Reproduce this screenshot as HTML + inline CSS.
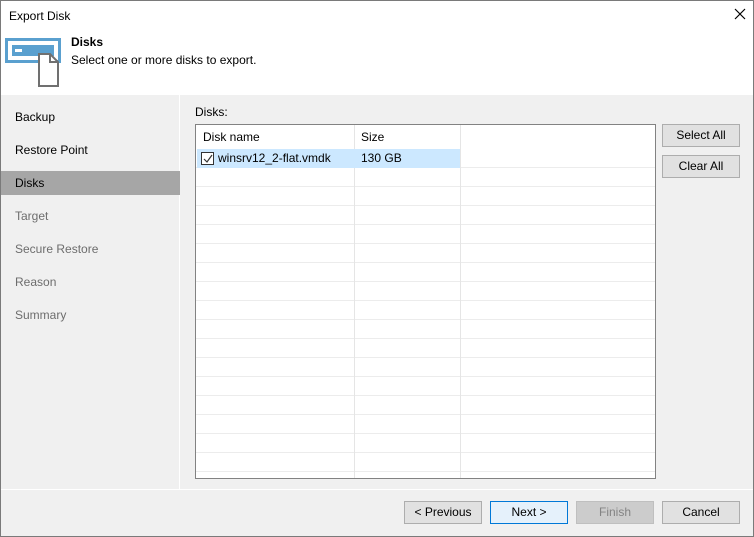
<!DOCTYPE html><html><head><style>
*{box-sizing:border-box;margin:0;padding:0}
body{width:754px;height:537px;position:relative;font-family:"Segoe UI","Liberation Sans",sans-serif;font-size:12px;color:#000;background:#f0f0f0;overflow:hidden}
.win{position:absolute;left:0;top:0;width:754px;height:537px;border:1px solid #7a7a7a}
.abs{position:absolute}
.btn{position:absolute;height:23px;width:78px;border:1px solid #adadad;background:#e1e1e1;text-align:center;line-height:21px;font-size:12px}
.nav{position:absolute;left:14px;font-size:12px;color:#000}
.dim{color:#6d6d6d}
</style></head><body><div class="win">
<div class="abs" style="left:0;top:0;width:752px;height:94px;background:#fff"></div>
<div class="abs" style="left:8px;top:8px;font-size:12px">Export Disk</div>
<svg class="abs" style="left:733px;top:7px" width="12" height="12"><path d="M1 1L11 11M11 1L1 11" stroke="#000" stroke-width="1.2"/></svg>
<svg class="abs" style="left:-1px;top:29px" width="70" height="62"><rect x="6.5" y="9.5" width="53" height="22" fill="none" stroke="#5aa0cf" stroke-width="3"/><rect x="12" y="15" width="42" height="11" fill="#5aa0cf"/><rect x="15" y="19" width="7" height="3" fill="#fff"/><path d="M39 24h11l8 8v24h-19z" fill="#fff" stroke="#707070" stroke-width="2"/><path d="M50 24v8h8" fill="none" stroke="#707070" stroke-width="2"/></svg>
<div class="abs" style="left:70px;top:34px;font-weight:bold">Disks</div>
<div class="abs" style="left:70px;top:52px">Select one or more disks to export.</div>
<div class="abs" style="left:0;top:94px;width:179px;height:394px;background:#f0f0f0;border-right:1px solid #fff"></div>
<div class="abs" style="left:0;top:170px;width:179px;height:24px;background:#a6a6a6"></div>
<div class="nav" style="top:109px">Backup</div>
<div class="nav" style="top:142px">Restore Point</div>
<div class="nav" style="top:175px">Disks</div>
<div class="nav dim" style="top:208px">Target</div>
<div class="nav dim" style="top:241px">Secure Restore</div>
<div class="nav dim" style="top:274px">Reason</div>
<div class="nav dim" style="top:307px">Summary</div>
<div class="abs" style="left:194px;top:104px">Disks:</div>
<div class="abs" style="left:194px;top:123px;width:461px;height:355px;background:#fff;border:1px solid #828282;overflow:hidden">
<div class="abs" style="left:0;top:24px;width:459px;height:330px;background:repeating-linear-gradient(to bottom,transparent 0,transparent 18px,#ececec 18px,#ececec 19px)"></div>
<div class="abs" style="left:158px;top:0;width:1px;height:355px;background:#e5e5e5"></div>
<div class="abs" style="left:264px;top:0;width:1px;height:355px;background:#e5e5e5"></div>
<div class="abs" style="left:1px;top:24px;width:263px;height:19px;background:#cce8ff"></div>
<div class="abs" style="left:7px;top:5px">Disk name</div>
<div class="abs" style="left:165px;top:5px">Size</div>
<div class="abs" style="left:5px;top:27px;width:13px;height:13px;border:1px solid #333;background:#fff"></div>
<svg class="abs" style="left:6px;top:28px" width="12" height="12"><path d="M2 6l3 3 5-7" fill="none" stroke="#333" stroke-width="1.2"/></svg>
<div class="abs" style="left:22px;top:26px">winsrv12_2-flat.vmdk</div>
<div class="abs" style="left:165px;top:26px">130 GB</div>
</div>
<div class="btn" style="left:661px;top:123px">Select All</div>
<div class="btn" style="left:661px;top:154px">Clear All</div>
<div class="abs" style="left:0;top:488px;width:752px;height:1px;background:#fff"></div>
<div class="btn" style="left:403px;top:500px">&lt; Previous</div>
<div class="btn" style="left:489px;top:500px;border-color:#0078d7;background:#e5f1fb">Next &gt;</div>
<div class="btn" style="left:575px;top:500px;border-color:#bfbfbf;background:#cccccc;color:#838383">Finish</div>
<div class="btn" style="left:661px;top:500px">Cancel</div>
</div></body></html>
